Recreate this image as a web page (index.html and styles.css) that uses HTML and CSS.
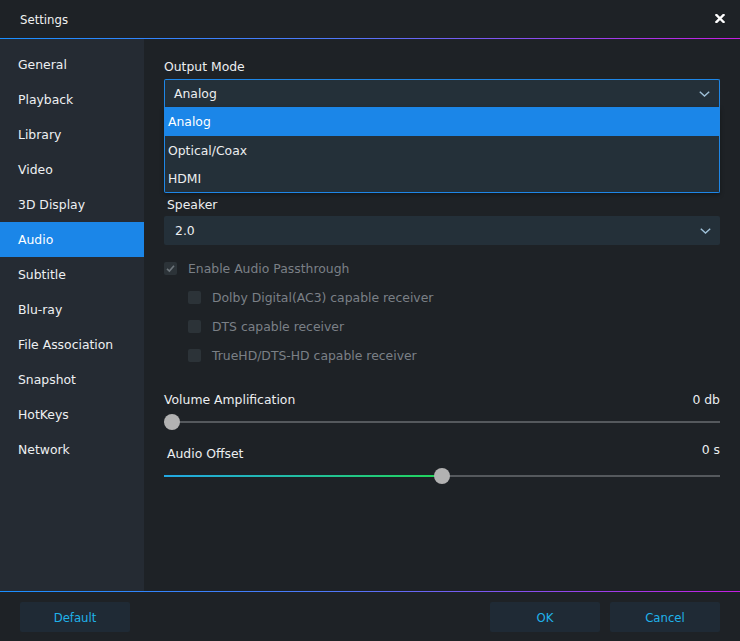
FILE: index.html
```html
<!DOCTYPE html>
<html>
<head>
<meta charset="utf-8">
<link rel="stylesheet" href="styles.css">
</head>
<body>
<div class="window">
  <header class="titlebar">
    <span class="title">Settings</span>
    <span class="close"><svg width="10" height="9" viewBox="0 0 10 9"><path d="M1.5 1 L8.5 8 M8.5 1 L1.5 8" stroke="#fff" stroke-width="2.4" stroke-linecap="square"/></svg></span>
  </header>
  <div class="divider"></div>
  <div class="body">
    <nav class="sidebar">
      <div class="nav-item">General</div>
      <div class="nav-item">Playback</div>
      <div class="nav-item">Library</div>
      <div class="nav-item">Video</div>
      <div class="nav-item">3D Display</div>
      <div class="nav-item active">Audio</div>
      <div class="nav-item">Subtitle</div>
      <div class="nav-item">Blu-ray</div>
      <div class="nav-item">File Association</div>
      <div class="nav-item">Snapshot</div>
      <div class="nav-item">HotKeys</div>
      <div class="nav-item">Network</div>
    </nav>
    <main class="content">
      <div class="label">Output Mode</div>
      <div class="select-wrap">
        <div class="select open">
          <span>Analog</span>
          <svg class="chev" width="11" height="6" viewBox="0 0 11 6"><path d="M0.8 0.8 L5.5 5 L10.2 0.8" fill="none" stroke="#9fc0d8" stroke-width="1.4"/></svg>
        </div>
        <div class="options">
          <div class="option selected">Analog</div>
          <div class="option">Optical/Coax</div>
          <div class="option">HDMI</div>
        </div>
      </div>

      <div class="label speaker-label">Speaker</div>
      <div class="select filled">
        <span>2.0</span>
        <svg class="chev" width="11" height="6" viewBox="0 0 11 6"><path d="M0.8 0.8 L5.5 5 L10.2 0.8" fill="none" stroke="#9fc0d8" stroke-width="1.4"/></svg>
      </div>

      <div class="check-row main-check">
        <span class="box"><svg width="13" height="13" viewBox="0 0 13 13"><path d="M3 6.8 L5.4 9 L10 3.8" fill="none" stroke="#6e767c" stroke-width="1.6"/></svg></span>
        <span>Enable Audio Passthrough</span>
      </div>
      <div class="sub-checks">
        <div class="check-row"><span class="box"></span><span>Dolby Digital(AC3) capable receiver</span></div>
        <div class="check-row"><span class="box"></span><span>DTS capable receiver</span></div>
        <div class="check-row"><span class="box"></span><span>TrueHD/DTS-HD capable receiver</span></div>
      </div>

      <div class="slider-head vol-head">
        <span>Volume Amplification</span>
        <span>0 db</span>
      </div>
      <div class="slider">
        <div class="track"></div>
        <div class="thumb" style="left:0px"></div>
      </div>

      <div class="slider-head offset-head">
        <span class="offset-label">Audio Offset</span>
        <span class="offset-val">0 s</span>
      </div>
      <div class="slider">
        <div class="track"></div>
        <div class="fill" style="width:278px"></div>
        <div class="thumb" style="left:270px"></div>
      </div>
    </main>
  </div>
  <div class="divider"></div>
  <footer class="footer">
    <button class="btn">Default</button>
    <div class="footer-right">
      <button class="btn">OK</button>
      <button class="btn">Cancel</button>
    </div>
  </footer>
</div>
</body>
</html>
```

FILE: styles.css
```css
* { box-sizing: border-box; }
html, body {
  margin: 0;
  padding: 0;
  background: #1e2226;
}
body {
  font-family: "DejaVu Sans", sans-serif;
  font-size: 12.4px;
  color: #e6e8ea;
}
.window {
  width: 740px;
  height: 641px;
  display: flex;
  flex-direction: column;
  background: #1e2226;
}
.titlebar {
  height: 38px;
  flex: none;
  display: flex;
  align-items: center;
  justify-content: space-between;
  padding: 0 15px 0 20px;
}
.title {
  font-family: "DejaVu Sans Condensed", "DejaVu Sans", sans-serif;
  font-size: 13px;
  color: #f2f2f2;
}
.close {
  display: flex;
  align-items: center;
  margin-top: -2px;
}
.divider {
  height: 1px;
  flex: none;
  background: linear-gradient(90deg, #1a8fff 0%, #4f78f8 45%, #9a40ea 80%, #c41ee0 100%);
}
.body {
  flex: 1;
  display: flex;
  min-height: 0;
}
.sidebar {
  width: 144px;
  flex: none;
  background: #252b33;
  padding-top: 8px;
}
.nav-item {
  height: 35px;
  display: flex;
  align-items: center;
  padding-left: 18px;
  color: #eef0f2;
}
.nav-item.active {
  background: #1b86e8;
  color: #ffffff;
}
.content {
  flex: 1;
  padding: 19px 20px 0 20px;
  display: flex;
  flex-direction: column;
}
.content > * {
  flex-shrink: 0;
}
.label {
  line-height: 18px;
  height: 18px;
  margin-bottom: 3px;
  color: #eceef0;
}
.select-wrap {
  position: relative;
}
.select {
  height: 28px;
  display: flex;
  align-items: center;
  justify-content: space-between;
  padding: 0 9px 0 10px;
  background: #243039;
  border-radius: 2px;
  color: #eceef0;
}
.select.open {
  border: 1px solid #1e86e6;
  border-bottom: none;
  border-radius: 2px 2px 0 0;
  padding-left: 9px;
}
.chev { margin-top: 1px; }
.options {
  position: absolute;
  left: 0;
  right: 0;
  top: 100%;
  background: #243039;
  border: 1px solid #1e86e6;
  border-top: none;
  border-radius: 0 0 2px 2px;
  box-shadow: 0 2px 4px rgba(0,0,0,0.35);
  z-index: 5;
}
.option {
  height: 28px;
  display: flex;
  align-items: center;
  padding-left: 3px;
  color: #eceef0;
}
.option.selected {
  background: #1b86e8;
  height: 29px;
  color: #ffffff;
}
.speaker-label {
  margin-top: 88px;
  margin-bottom: 3px;
  padding-left: 3px;
  padding-top: 1px;
  line-height: 17px;
}
.select.filled {
  height: 29px;
  padding-left: 11px;
}
.check-row {
  display: flex;
  align-items: center;
  gap: 11px;
  height: 16px;
  color: #7b8086;
}
.box {
  width: 13px;
  height: 13px;
  background: #2c3338;
  border-radius: 2px;
  display: flex;
  flex: none;
}
.main-check {
  margin-top: 15px;
}
.sub-checks {
  display: flex;
  flex-direction: column;
  gap: 13px;
  padding-left: 24px;
  margin-top: 13px;
}
.slider-head {
  display: flex;
  justify-content: space-between;
  line-height: 17px;
  height: 18px;
  padding-top: 1px;
  color: #eceef0;
}
.vol-head {
  margin-top: 27px;
}
.offset-head {
  margin-top: 14px;
}
.offset-label {
  padding-left: 3px;
}
.offset-val {
  margin-top: -4px;
}
.slider {
  position: relative;
  height: 16px;
  margin-top: 6px;
}
.track {
  position: absolute;
  left: 0;
  right: 0;
  top: 7px;
  height: 2px;
  background: #55595d;
}
.fill {
  position: absolute;
  left: 0;
  top: 7px;
  height: 2px;
  background: linear-gradient(90deg, #22a8e4, #22d65a);
}
.thumb {
  position: absolute;
  top: 0;
  width: 16px;
  height: 16px;
  border-radius: 50%;
  background: #b2b2b2;
}
.footer {
  height: 49px;
  flex: none;
  display: flex;
  justify-content: space-between;
  align-items: flex-start;
  padding: 10px 20px 0 20px;
}
.footer-right {
  display: flex;
  gap: 10px;
}
.btn {
  width: 110px;
  height: 30px;
  border: none;
  border-radius: 2px;
  background: #1f2a35;
  color: #1fb2ea;
  font-family: "DejaVu Sans Condensed", "DejaVu Sans", sans-serif;
  font-size: 13px;
  padding: 0;
}
```
